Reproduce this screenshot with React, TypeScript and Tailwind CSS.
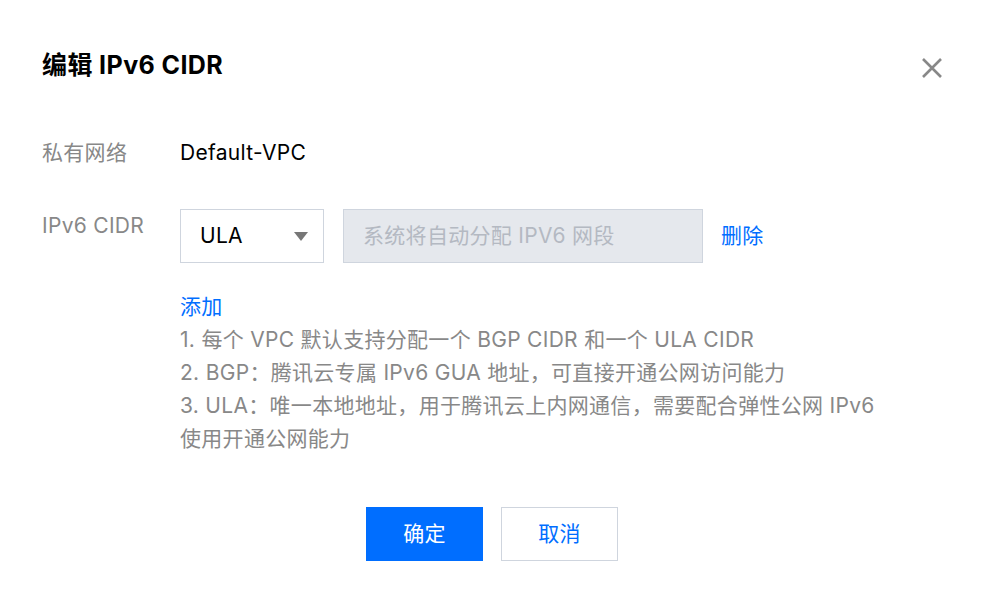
import React from "react";

const tips = [
  "1. 每个 VPC 默认支持分配一个 BGP CIDR 和一个 ULA CIDR",
  "2. BGP：腾讯云专属 IPv6 GUA 地址，可直接开通公网访问能力",
  "3. ULA：唯一本地地址，用于腾讯云上内网通信，需要配合弹性公网 IPv6 使用开通公网能力",
];

const CloseIcon = () => (
  <svg width="22" height="22" viewBox="0 0 22 22" fill="none">
    <path d="M2 2L20 20M20 2L2 20" stroke="#888888" strokeWidth="2.6" />
  </svg>
);

const App: React.FC = () => {
  return (
    <div
      className="relative h-[602px] w-[986px] bg-white px-[42px] pt-[50px] text-[21px] tracking-[0.3px] text-black"
      style={{ fontFamily: 'Inter, "Noto Sans CJK SC", sans-serif' }}
    >
      <div className="flex items-center justify-between">
        <h1 className="text-[25px] font-bold leading-[30px] tracking-[0.4px]">编辑 IPv6 CIDR</h1>
        <button className="mr-[1px] mt-[6px]">
          <CloseIcon />
        </button>
      </div>

      <div className="mt-[58px] flex leading-[30px]">
        <span className="w-[138px] text-[#888888]">私有网络</span>
        <span>Default-VPC</span>
      </div>

      <div className="mt-[41px] flex">
        <span className="w-[138px] pt-[2px] leading-[30px] text-[#888888]">IPv6 CIDR</span>
        <div className="flex flex-col">
          <div className="flex items-center">
            <div className="flex h-[54px] w-[144px] items-center justify-between border border-[#cfd5de] pl-[19px] pr-[15px]">
              <span>ULA</span>
              <span className="h-0 w-0 border-x-[7px] border-t-[9px] border-x-transparent border-t-[#777777]" />
            </div>
            <div className="ml-[19px] flex h-[54px] w-[360px] items-center border border-[#cfd5de] bg-[#e5e8ed] px-[19px] text-[#b4b9c2]">
              系统将自动分配 IPV6 网段
            </div>
            <a className="ml-[18px] text-[#006eff]">删除</a>
          </div>
          <div className="mt-[27px] leading-[33px]">
            <a className="text-[#006eff]">添加</a>
            <div className="w-[712px] text-[#888888]">
              {tips.map((t) => (
                <p key={t}>{t}</p>
              ))}
            </div>
          </div>
        </div>
      </div>

      <div className="mt-[52px] flex justify-center gap-[18px] pr-[2px]">
        <button className="h-[54px] w-[117px] bg-[#006eff] text-white">确定</button>
        <button className="h-[54px] w-[117px] border border-[#cfd5de] text-[#006eff]">取消</button>
      </div>
    </div>
  );
};

export default App;
